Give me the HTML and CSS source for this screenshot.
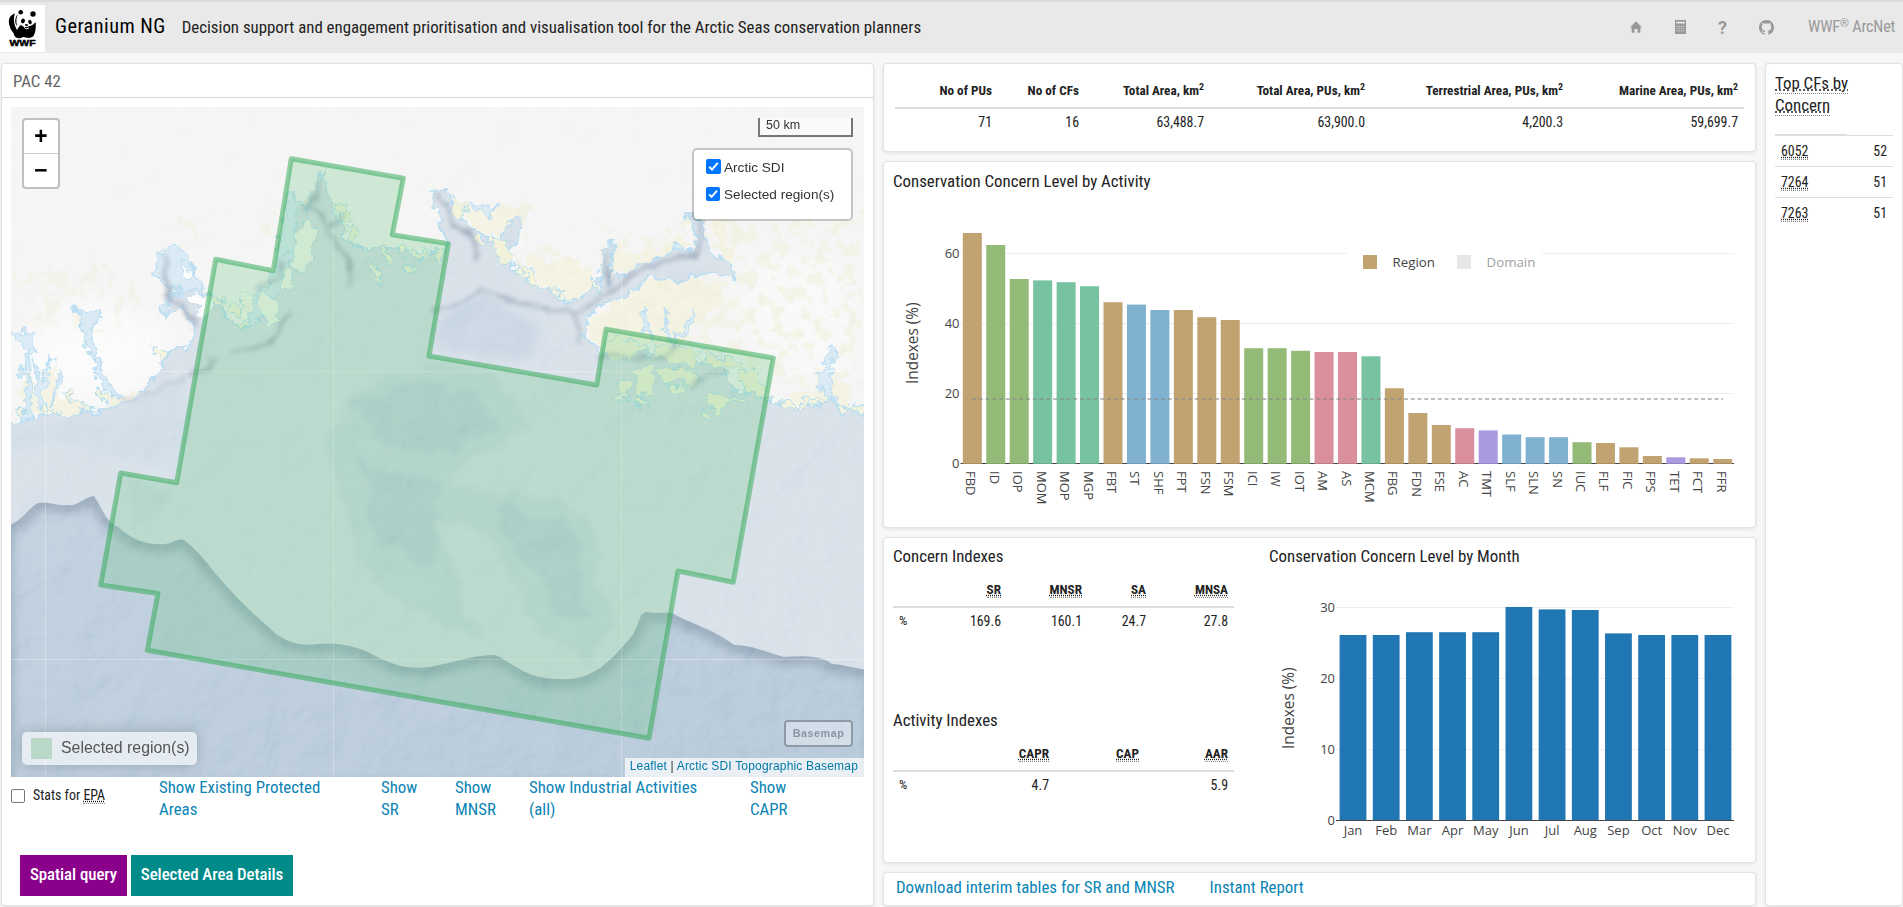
FILE: index.html
```html
<!DOCTYPE html>
<html lang="en">
<head>
<meta charset="utf-8">
<title>Geranium NG</title>
<link rel="stylesheet" href="styles.css">
</head>
<body>
<header class="navbar">
  <div class="logo">
    <svg viewBox="0 0 45 47" width="45" height="47">
      <g fill="#000">
        <circle cx="20.7" cy="7.2" r="2.3"/><circle cx="33" cy="9" r="2.7"/>
        <path d="M15 8.500C9 10 7.500 16 10 22C11 26 13 26 14 30C16 34 20 34 23 32C27 33 32 34 34 30C36 26 36 20 35.500 17C33 20 31 21 29 21C27 23 23 22 21 20C18 22 18 24 17 25C14 20 13 13 15 8.500Z"/>
        <path d="M18 9C14 13 15 19 17 21C16 16 16 13 18 9Z"/>
        <ellipse cx="23" cy="16" rx="1.900" ry="2.400" transform="rotate(30 23 16)"/>
        <ellipse cx="30" cy="17" rx="1.700" ry="2.300" transform="rotate(-25 30 17)"/>
        <ellipse cx="26.500" cy="20" rx="1.500" ry="1"/>
      </g>
      <path d="M24 22l2 2 3-1M11 27l3 2" stroke="#fff" stroke-width=".9" fill="none"/>
      <text class="logo-text" x="9.500" y="41.300" textLength="26" lengthAdjust="spacingAndGlyphs">WWF</text>
    </svg>
  </div>
  <h1 class="brand">Geranium NG</h1>
  <span class="tagline">Decision support and engagement prioritisation and visualisation tool for the Arctic Seas conservation planners</span>
  <nav class="nav-right">
    <svg class="i-home" viewBox="0 0 12 12" width="12" height="12"><path d="M6 .3 12 6.500H10.400V11.700H7.500V8H4.500V11.700H1.600V6.500H0Z"/></svg>
    <svg class="i-calc" viewBox="0 0 11 14" width="11" height="14"><path d="M0 0H11V14H0Z"/><path fill="#e9e9e9" d="M1.300 1.700h8.400v1.900H1.300ZM1.500 6h1v1h-1zm2.200 0h1v1h-1zm2.200 0h1v1h-1zm2.200 0h1v1h-1zM1.500 8.300h1v1h-1zm2.200 0h1v1h-1zm2.200 0h1v1h-1zm2.200 0h1v1h-1zM1.500 10.600h1v1h-1zm2.200 0h1v1h-1zm2.200 0h1v1h-1zm2.200 0h1v1h-1z"/></svg>
    <span class="i-help">?</span>
    <svg class="i-git" viewBox="0 0 16 16" width="15" height="15"><path d="M8 0C3.580 0 0 3.580 0 8c0 3.540 2.290 6.530 5.470 7.590.4.070.55-.17.55-.38 0-.19-.01-.82-.01-1.490-2.010.37-2.530-.49-2.690-.94-.09-.23-.48-.94-.82-1.130-.28-.15-.68-.52-.01-.53.63-.01 1.080.58 1.230.82.720 1.210 1.870.87 2.330.66.070-.52.280-.87.510-1.070-1.780-.2-3.640-.89-3.640-3.950 0-.87.310-1.590.82-2.150-.08-.2-.36-1.020.08-2.120 0 0 .67-.21 2.200.82.640-.18 1.320-.27 2-.27s1.360.09 2 .27c1.530-1.040 2.200-.82 2.200-.82.440 1.100.16 1.920.08 2.120.51.560.82 1.270.82 2.150 0 3.070-1.870 3.750-3.650 3.950.29.250.54.730.54 1.480 0 1.070-.01 1.930-.01 2.200 0 .21.15.46.55.38A8.010 8.010 0 0 0 16 8c0-4.420-3.580-8-8-8Z"/></svg>
    <span class="arcnet">WWF<sup>®</sup> ArcNet</span>
  </nav>
</header>

<main class="board">
  <section class="card map-card">
    <div class="card-title">PAC 42</div>
    <div class="map">
      <svg class="map-art" viewBox="11 107 853 670" width="853" height="670">
        <defs>
          <filter id="rough" x="-5%" y="-5%" width="110%" height="110%"><feTurbulence type="fractalNoise" baseFrequency=".09" numOctaves="3" seed="4"/><feDisplacementMap in="SourceGraphic" scale="17" xChannelSelector="R" yChannelSelector="G"/></filter>
          <filter id="wavy" x="-5%" y="-5%" width="110%" height="110%"><feTurbulence type="fractalNoise" baseFrequency=".03" numOctaves="3" seed="9"/><feDisplacementMap in="SourceGraphic" scale="30" xChannelSelector="R" yChannelSelector="G"/><feGaussianBlur stdDeviation="2.500"/></filter>
          <filter id="b2" x="-20%" y="-20%" width="140%" height="140%"><feTurbulence type="fractalNoise" baseFrequency=".06" numOctaves="2" seed="3"/><feDisplacementMap in="SourceGraphic" scale="14" xChannelSelector="R" yChannelSelector="G"/><feGaussianBlur stdDeviation="2"/></filter>
          <filter id="b4" x="-20%" y="-20%" width="140%" height="140%"><feGaussianBlur stdDeviation="4"/></filter>
          <filter id="b18" x="-40%" y="-40%" width="180%" height="180%"><feGaussianBlur stdDeviation="18"/></filter>
          <filter id="patchy" x="-5%" y="-5%" width="110%" height="110%"><feTurbulence type="fractalNoise" baseFrequency=".07" numOctaves="3" seed="12" result="n"/><feColorMatrix in="n" values="0 0 0 0 1  0 0 0 0 1  0 0 0 0 1  0 7 0 0 -3.500" result="m"/><feDisplacementMap in="SourceGraphic" in2="n" scale="18" xChannelSelector="R" yChannelSelector="G" result="d"/><feComposite in="d" in2="m" operator="in"/></filter>
          <filter id="relief" x="0" y="0" width="100%" height="100%"><feTurbulence type="fractalNoise" baseFrequency=".022" numOctaves="4" seed="7"/><feDiffuseLighting surfaceScale="7" diffuseConstant="1.250" lighting-color="#fff"><feDistantLight azimuth="225" elevation="40"/></feDiffuseLighting></filter>
          <path id="slope" d="M5 527C25 520 28 508 38 503C52 502 56 506 66 505C78 507 84 497 94 496C102 508 106 522 118 527C135 542 148 545 164 544C174 544 176 538 184 540C200 552 212 570 222 581C242 604 258 618 276 634C292 645 305 646 318 644C340 642 352 646 368 652C390 664 404 670 430 667C450 664 470 655 495 655C512 662 526 680 560 679C596 682 615 655 632 636C640 625 638 612 648 612C656 614 664 612 672 613C690 624 712 628 734 645C752 645 768 653 784 657C800 656 820 655 832 664C845 665 856 668 875 672V790H5Z"/>
          <clipPath id="deepClip"><use href="#slope"/></clipPath>
          <linearGradient id="deepG" x1="0" y1="0" x2="1" y2="1"><stop offset="0" stop-color="#bccddc"/><stop offset=".5" stop-color="#b6c8d9"/><stop offset="1" stop-color="#b0c4d6"/></linearGradient>
        </defs>
        <rect x="11" y="107" width="853" height="670" fill="#f4f4f4"/>
        <g filter="url(#b18)" fill="#fefefe"><path d="M20 350 80 300 180 330 170 350 130 395 30 400Z" opacity=".7"/><path d="M750 260 850 260V380L790 370 740 330Z" opacity=".5"/></g>
        <!-- lowland -->
        <g filter="url(#rough)" fill="#f3f2e0">
          <path d="M18 395 30 370 36 395 55 365 58 400 75 395 90 412 40 420Z"/>
          <path d="M105 388 118 396 138 392 130 407 108 405Z"/>
          <path d="M450 192 475 208 505 205 525 215 515 235 480 232Z"/>
          <path d="M525 255 545 262 565 258 590 268 598 286 572 303 545 288Z"/>
          <path d="M614 248 650 255 680 235 692 245 640 268 610 276Z"/>
          <path d="M710 215 722 215 735 262 722 260Z"/>
          <path d="M585 325 620 297 650 282 700 280 720 284 725 300 700 318 680 345 640 345 600 350Z"/>
          <path d="M785 400 820 385 845 385 858 415 840 412Z"/>
        </g>
        <g filter="url(#patchy)" fill="#eeeed8">
          <path d="M15 270 70 265 120 270 140 300 120 330 60 345 15 320ZM175 220 200 225 200 250 180 250ZM265 195 282 205 275 240 260 235ZM325 200 360 205 360 245 330 240Z" opacity=".4"/>
          <path d="M490 200 530 210 525 240 560 255 600 260 605 230 650 240 690 215 670 180 720 150 864 215V400L800 390 735 370 690 345 580 345 590 320 650 280 740 275 700 230 640 262 600 290 520 270 490 235Z" opacity=".65"/>
        </g>
        <!-- shelf -->
        <g filter="url(#rough)">
          <path id="shelf" fill="#d5dee7" stroke="#b3daf0" stroke-width="2" d="M5 424 40 418 70 416 110 408 135 400 152 382 170 352 190 348 195 330 186 312 170 306 178 290 166 285 160 265 170 255 190 266 200 288 215 296 228 318 240 326 250 332 262 318 272 295 280 284 290 270 284 240 292 205 306 208 316 190 320 172 326 190 330 205 336 215 345 235 360 250 395 250 425 257 448 245 437 215 432 192 446 190 452 210 470 225 484 235 500 240 512 220 520 216 516 240 505 262 520 272 545 290 570 303 598 288 604 252 613 238 608 285 640 264 670 254 695 252 698 235 686 212 702 222 706 250 725 258 737 278 710 273 680 280 650 278 630 292 600 306 588 318 584 335 600 352 620 357 665 352 690 355 720 370 735 390 770 402 800 407 835 400 875 420V790H5Z"/>
          <g fill="#d6e8f3" stroke="#b3daf0" stroke-width="1.500">
            <path d="M74 308 86 315 100 309 98 322 91 335 96 355 104 375 115 392 124 398 108 394 97 372 87 350 84 325Z"/>
            <path d="M5 328 28 336 36 330 33 346 28 362 32 390 30 422 22 425 27 380 18 375 28 350Z"/><path d="M34 358 42 380 52 355 48 378 38 410ZM60 370 64 375 55 398 50 405Z"/>
            <path d="M158 252 176 247 188 257 190 272 206 288 190 292 176 285 170 306 166 318 164 308 172 290 156 276Z"/>
            <path d="M288 195 297 195 296 225 288 262 284 290 272 300 262 322 256 320 250 332 246 305 262 292 276 272 280 240Z"/>
            <path d="M470 205 495 205 490 220ZM645 305 650 335 648 345 643 320ZM666 310 672 345 666 335ZM672 342 695 310 690 330ZM675 240 682 250 672 252Z"/>
            <path d="M828 347 838 350 832 365 830 385 835 400 824 395 815 375 824 372Z"/>
          </g>
          <g fill="#fcfcfc" stroke="#b3daf0"><path d="M181 264 192 276 190 282 180 272ZM184 296 205 294 216 300 204 318Z"/></g>
          <g fill="#f5f5ea" stroke="#a9d9ec"><ellipse cx="303" cy="247" rx="11" ry="27" transform="rotate(12 303 247)"/><ellipse cx="270" cy="310" rx="9" ry="16" transform="rotate(-18 270 310)"/><ellipse cx="246" cy="305" rx="6" ry="14"/><ellipse cx="287" cy="280" rx="5" ry="11"/></g>
          <g fill="#f2f1d6" stroke="#a9d9ec">
            <path d="M606 338 640 340 646 352 622 360 605 356ZM655 345 690 350 700 358 690 366 668 360 652 358ZM700 352 735 358 745 372 730 368 712 366ZM615 385 628 378 632 392 622 394ZM634 372 652 366 656 378 650 390 640 398 636 386ZM658 370 672 366 690 370 700 378 690 386 676 380 668 386ZM736 374 752 366 762 382 770 400 752 396 742 386ZM705 398 722 392 730 404 716 412ZM335 203 348 208 352 222 342 220ZM352 225 358 232 352 245ZM340 218 348 226 345 236Z"/>
            <path d="M455 196 468 208 462 218 450 212ZM488 235 505 240 512 256 505 264 492 250ZM515 262 530 268 540 284 525 280Z"/>
          </g>
        </g>
        <!-- skerries -->
        <g class="skerries" filter="url(#rough)">
          <path id="isles" d="M371 265l7 9M385 250l2 10M400 248l4 5M418 250l4 8M436 250l5 8M377 282l3 2M405 265l4 3M240 325l8 2M215 300l6 3M232 308l5 6M480 238l3 5M520 272l5 3M555 290l8 2M595 280l3 8M620 395l4 2M640 402l5 2M672 390l10 2M706 412l3 6M735 398l6 4M785 400l8 6M800 408l6-8M815 400l10 3M840 405l4 6M18 408l3 8M42 405l3 6M55 410l3 3M70 395l3 6M82 405l6 4M100 392l4 8M155 350l10 6M855 405l4 8"/>
          <use class="core" href="#isles"/>
        </g>
        <!-- fjord channels -->
        <g fill="none" stroke="#8b98ab" stroke-width="3.500" filter="url(#b2)" opacity=".75">
          <path d="M319 180 316 198 305 208 322 212 328 235 342 255 350 262 350 290M345 215 330 226"/><path d="M166 255 168 300 180 305 195 325M285 262 260 292M290 310 280 332 262 345 230 355M190 380 215 360 205 355"/>
          <path d="M440 195 452 220 475 240 478 262M575 312 610 292 650 266 695 256 704 240 695 215M608 250 606 290"/>
          <path d="M430 310 460 305 480 290 510 300 550 310 575 314 578 345M600 358 640 358 665 356 680 345M690 386 725 368" opacity=".8"/>
          <path d="M120 402 140 400 165 385 185 380" opacity=".6"/>
        </g>
        <g filter="url(#b4)">
          <path fill="#c2d1e0" d="M440 315 485 293 520 315 540 330 530 360 450 352 432 345Z" opacity=".8"/>
          <path fill="#c8d8e6" d="M11 430 100 418 180 380 190 420 178 470 120 455 60 440 11 450Z" opacity=".6"/>
        </g>
        <g filter="url(#wavy)">
          <path fill="#c3d2df" opacity=".65" d="M345 390 440 360 500 385 530 430 480 455 440 475 480 490 560 500 590 520 600 580 620 620 590 660 545 640 520 600 500 560 465 515 440 520 450 570 480 640 430 615 380 590 350 540 340 480 325 440Z"/>
          <path fill="#b3c6d7" opacity=".5" d="M340 400 420 380 480 400 500 430 440 450 380 440ZM495 505 570 520 575 560 590 610 560 615 530 570 500 530ZM360 465 430 480 440 540 430 570 380 540Z"/>
          <path fill="#c3d2df" opacity=".5" d="M125 480 175 490 160 515 130 530Z"/>
        </g>
        <!-- continental slope -->
        <use href="#slope" fill="url(#deepG)"/>
        <g clip-path="url(#deepClip)"><use href="#slope" fill="none" stroke="#7f92a4" stroke-width="17" filter="url(#b4)" opacity=".6"/></g>
        <rect class="relief" x="11" y="107" width="853" height="670" filter="url(#relief)"/>
        <path stroke="#fff" stroke-opacity=".3" d="M45.500 107V777M333.500 107V777M621.500 107V777M11 371.500H864M11 659.500H864"/>
        <path class="region" d="M291.300 158.700 403.300 178.300 392.300 234.700 448.300 243.700 429 356 596.700 385 606 329.300 773.300 358 733.300 582.300 678 571 649 738.300 147.300 650.300 158 593.500 100.700 585 120.700 473 176.700 482.700 215.700 259.300 273.300 270.700Z"/>
      </svg>
      <div class="zoom"><span>+</span><span>−</span></div>
      <div class="scale">50 km</div>
      <div class="layers">
        <label class="l1"><i class="cb"><svg viewBox="0 0 15 15"><path d="M3.300 7.800 6 10.600 11.800 3.800"/></svg></i>Arctic SDI</label>
        <label class="l2"><i class="cb"><svg viewBox="0 0 15 15"><path d="M3.300 7.800 6 10.600 11.800 3.800"/></svg></i>Selected region(s)</label>
      </div>
      <div class="legend"><i></i>Selected region(s)</div>
      <div class="basemap">Basemap</div>
      <div class="attrib"><a>Leaflet</a> | <a>Arctic SDI Topographic Basemap</a></div>
    </div>
    <div class="links">
      <label class="stats"><i></i><span>Stats for <abbr>EPA</abbr></span></label>
      <a>Show Existing Protected<br>Areas</a><a>Show<br>SR</a><a>Show<br>MNSR</a><a>Show Industrial Activities<br>(all)</a><a>Show<br>CAPR</a>
    </div>
    <div class="buttons"><button class="btn purple">Spatial query</button><button class="btn teal">Selected Area Details</button></div>
  </section>

  <div class="middle">
    <section class="card totals">
      <table class="tbl">
        <colgroup><col class="a"><col class="b"><col class="c"><col class="d"><col class="e"><col class="f"></colgroup>
        <tr><th>No of PUs</th><th>No of CFs</th><th>Total Area, km<sup>2</sup></th><th>Total Area, PUs, km<sup>2</sup></th><th>Terrestrial Area, PUs, km<sup>2</sup></th><th>Marine Area, PUs, km<sup>2</sup></th></tr>
        <tr><td>71</td><td>16</td><td>63,488.7</td><td>63,900.0</td><td>4,200.3</td><td>59,699.7</td></tr>
      </table>
    </section>
    <section class="card activity">
      <h2>Conservation Concern Level by Activity</h2>
      <svg id="activity" class="chart" viewBox="884 200 870 326" width="870" height="326"></svg>
    </section>
    <section class="card indexes">
      <div class="idx-left">
        <div class="idx-block">
          <h2>Concern Indexes</h2>
          <table class="tbl">
            <colgroup><col class="g"><col class="h"><col class="i"><col class="j"><col class="k"></colgroup>
            <tr><th></th><th><abbr>SR</abbr></th><th><abbr>MNSR</abbr></th><th><abbr>SA</abbr></th><th><abbr>MNSA</abbr></th></tr>
            <tr><td class="pc">%</td><td>169.6</td><td>160.1</td><td>24.7</td><td>27.8</td></tr>
          </table>
        </div>
        <div class="idx-block">
          <h2>Activity Indexes</h2>
          <table class="tbl">
            <colgroup><col class="g"><col class="l"><col class="m"><col class="n"></colgroup>
            <tr><th></th><th><abbr>CAPR</abbr></th><th><abbr>CAP</abbr></th><th><abbr>AAR</abbr></th></tr>
            <tr><td class="pc">%</td><td>4.7</td><td></td><td>5.9</td></tr>
          </table>
        </div>
      </div>
      <div class="idx-right">
        <h2>Conservation Concern Level by Month</h2>
        <svg id="month" class="chart" viewBox="1269 575 485 286" width="485" height="286"></svg>
      </div>
    </section>
    <section class="card downloads"><a>Download interim tables for SR and MNSR</a><a>Instant Report</a></section>
  </div>

  <aside class="card top-cfs">
    <h2><abbr>Top CFs by<br>Concern</abbr></h2>
    <table class="tbl cfs">
      <tr><td><abbr>6052</abbr></td><td>52</td></tr>
      <tr><td><abbr>7264</abbr></td><td>51</td></tr>
      <tr><td><abbr>7263</abbr></td><td>51</td></tr>
    </table>
  </aside>
</main>
<script src="charts.js"></script>
</body>
</html>
```
FILE: styles.css
```css
* { box-sizing: border-box; }
body { margin: 0; height: 907px; overflow: hidden; background: #f7f7f7; color: #222; font-family: "Roboto Condensed", Roboto, sans-serif; font-stretch: 75%; font-size: 16.850px; line-height: 22px; }
a { color: #0a84b5; text-decoration: none; }
abbr { text-decoration: underline dotted; border-bottom: 1px dotted #888; }
h1, h2 { margin: 0; font-weight: 400; }
h2 { font-size: 16.850px; line-height: 22px; }
sup { font-size: 75%; line-height: 0; position: relative; top: -.5em; vertical-align: baseline; }

.navbar { height: 53px; background: #e9e9e9; border-top: 2px solid #dcdcdc; display: flex; align-items: center; }
.logo { width: 45px; height: 47px; background: #fff; margin-top: 2px; }
.logo svg { display: block; }
.logo-text { font: 900 9px "Liberation Sans", sans-serif; stroke: #000; stroke-width: .5px; }
.brand { font-size: 20.300px; letter-spacing: .45px; margin: 0 0 3px 10px; color: #000; white-space: nowrap; }
.tagline { margin: 0 0 1px 16px; white-space: nowrap; }
.nav-right { margin-left: auto; padding-right: 8px; display: flex; align-items: center; color: #999; fill: #999; margin-bottom: 1px; }
.i-calc { margin-left: 33px; }
.i-help { margin-left: 32px; font: 700 18px Roboto, sans-serif; }
.i-git { margin-left: 32px; }
.arcnet { margin-left: 34px; white-space: nowrap; width: 87px; font-size: 16.200px; letter-spacing: -.2px; }
.arcnet sup { font-size: 72%; top: -.45em; }

.board { display: grid; grid-template-columns: 871px 871px 136px; column-gap: 11px; padding: 11px 1px 2px 2px; height: 854px; }
.card { background: #fff; border-radius: 3px; box-shadow: 0 0 0 1px #e2e2e2, 0 1px 4px rgba(0,0,0,.14); min-width: 0; }
.middle { display: grid; grid-template-rows: 87px 365px 324px 32px; row-gap: 11px; }

.card-title { height: 34px; border-bottom: 1px solid #d5d5d5; padding: 6px 11px; color: #666; }
.map { position: relative; margin: 9px 9px 0; width: 853px; height: 670px; overflow: hidden; font-family: "Liberation Sans", sans-serif; font-stretch: normal; color: #333; }
.map-art { display: block; }
.skerries { fill: none; stroke: #a9d9ec; stroke-width: 7; stroke-linecap: round; }
.skerries .core { stroke: #f3f2da; stroke-width: 4.500; }
.relief { mix-blend-mode: soft-light; opacity: .3; }
.region { fill: rgba(108,200,132,.27); stroke: rgba(50,168,86,.52); stroke-width: 5; stroke-linejoin: round; }
.zoom { position: absolute; left: 11px; top: 11px; width: 38px; height: 71px; border: 2px solid rgba(0,0,0,.22); border-radius: 4px; background: #fff; background-clip: padding-box; font: 700 23px/37px "Liberation Mono", monospace; color: #000; }
.zoom span { display: block; height: 33px; text-align: center; }
.zoom span + span { border-top: 1px solid #ccc; height: 34px; }
.scale { position: absolute; right: 11px; top: 11px; width: 95px; height: 19px; border: 2px solid #777; border-top: 0; background: rgba(255,255,255,.5); font-size: 12.500px; line-height: 15px; padding-left: 6px; }
.layers { position: absolute; right: 11px; top: 41px; width: 161px; height: 73px; border: 2px solid rgba(0,0,0,.2); border-radius: 5px; background: #fff; background-clip: padding-box; font-size: 13.600px; padding: 9px 12px; }
.layers label { display: flex; height: 27px; line-height: 18px; white-space: nowrap; }
.cb { width: 15px; height: 15px; border-radius: 2px; background: #0075ff; margin-right: 3px; flex: none; }
.cb svg { display: block; fill: none; stroke: #fff; stroke-width: 2; }
.l2 .cb { width: 14px; height: 14px; margin: 1px 4px 0 0; }
.legend { position: absolute; left: 11px; bottom: 12px; width: 175px; height: 33px; border-radius: 5px; background: rgba(255,255,255,.6); box-shadow: 0 0 15px rgba(0,0,0,.2); display: flex; align-items: center; padding: 0 0 2px 9px; font-size: 15.850px; color: #555; white-space: nowrap; }
.legend i { width: 21px; height: 21px; background: #b9d8c8; margin-right: 9px; margin-top: 2px; }
.basemap { position: absolute; right: 11px; bottom: 30px; width: 69px; height: 27px; border: 2px solid #8d9ba8; border-radius: 4px; background: rgba(255,255,255,.35); font-size: 10.800px; font-weight: 700; line-height: 22px; text-align: center; letter-spacing: .5px; color: #8996a3; }
.attrib { position: absolute; right: 0; bottom: 0; height: 19px; background: rgba(255,255,255,.7); padding: 0 6px 0 5px; font-size: 12px; letter-spacing: .18px; line-height: 17px; white-space: nowrap; }
.attrib a { color: #0078a8; }

.links { display: grid; grid-template-columns: 148px 222px 74px 74px 221px auto; padding-left: 9px; height: 78px; white-space: nowrap; margin-top: -1px; margin-bottom: 1px; }
.stats { display: flex; font-size: 13.900px; gap: 8px; padding-top: 8px; }
.stats i { width: 14px; height: 14px; border: 1px solid #767676; border-radius: 2px; margin-top: 5px; }
.buttons { display: flex; gap: 4px; padding-left: 18px; }
.btn { border: 0; height: 41px; color: #fff; font: inherit; font-weight: 500; white-space: nowrap; padding: 0 0 3px; letter-spacing: -.05px; }
.purple { background: #8b008b; width: 107px; }
.teal { background: #008b8b; width: 162px; }

.tbl { border-collapse: collapse; table-layout: fixed; font-size: 13.900px; line-height: 18px; }
.tbl th, .tbl td { padding: 0 6px; text-align: right; white-space: nowrap; font-weight: 400; }
.tbl th { font-weight: 700; border-bottom: 2px solid #ddd; height: 34px; font-size: 13.200px; }
.tbl td { height: 30px; padding-bottom: 3px; }
.totals { padding: 10px 11px 0; }
.totals .tbl { width: 849px; }
.totals th { padding-top: 1px; }
.a { width: 103px; } .b { width: 87px; } .c { width: 125px; } .d { width: 161px; } .e { width: 198px; } .f { width: 175px; }
.activity h2 { padding: 8px 9px 0; height: 38px; }
.chart { display: block; overflow: visible; font-family: "Open Sans", sans-serif; font-stretch: normal; font-size: 13px; fill: #444; }
.indexes { display: grid; grid-template-columns: 376px 1fr; }
.idx-left { padding: 0 9px; }
.idx-block { height: 164px; padding-top: 7px; }
.idx-block .tbl { width: 341px; margin-top: 7px; }
.idx-block th { height: 33px; }
.tbl .pc { text-align: left; font-size: 13px; }
.g { width: 40px; } .h { width: 74px; } .i { width: 81px; } .j { width: 64px; } .k { width: 82px; }
.l { width: 122px; } .m { width: 90px; } .n { width: 89px; }
.idx-right { padding: 7px 0 0 9px; }
.idx-right .chart { margin: 7px 0 0; }
.downloads { display: flex; gap: 35px; padding: 3px 12px; white-space: nowrap; }
.top-cfs { padding: 8px 9px; }
.top-cfs h2 { width: 72px; height: 63px; border-bottom: 1px solid #ddd; white-space: nowrap; }
.cfs { width: 118px; }
.cfs td { height: 31px; border-top: 1px solid #ddd; padding-bottom: 0; }
.cfs td:first-child { text-align: left; }
```
FILE: charts.js
```js
const NS = 'http://www.w3.org/2000/svg';

function add(svg, tag, attrs, text) {
  const el = document.createElementNS(NS, tag);
  for (const k in attrs) el.setAttribute(k, attrs[k]);
  if (text !== undefined) el.textContent = text;
  svg.appendChild(el);
  return el;
}

function axes(svg, x1, x2, ticks, y0, unit) {
  ticks.forEach(t => {
    const y = y0 - t * unit;
    if (t) add(svg, 'line', { x1, x2, y1: Math.floor(y) + 0.5, y2: Math.floor(y) + 0.5, stroke: '#eee' });
    add(svg, 'text', { x: x1 - 1, y: y + 4.500, 'text-anchor': 'end' }, t);
  });
  add(svg, 'line', { x1, x2, y1: y0, y2: y0, stroke: '#444' });
}

const F = '#c1a271', I = '#94ba77', M = '#77c2a1', S = '#80b1d0', A = '#d98f9c', T = '#a999df';
const activity = [['FBD',233,F],['ID',245,I],['IOP',279,I],['MOM',280.4,M],['MOP',282.2,M],['MGP',286.2,M],['FBT',302.2,F],['ST',304.6,S],['SHF',310,S],['FPT',310,F],['FSN',317.2,F],['FSM',320,F],['ICI',348.2,I],['IW',348.2,I],['IOT',350.8,I],['AM',352,A],['AS',352,A],['MCM',356.3,M],['FBG',388.3,F],['FDN',413,F],['FSE',425,F],['AC',428.2,A],['TMT',430.4,T],['SLF',434.5,S],['SLN',437.2,S],['SN',437.2,S],['IUC',442.2,I],['FLF',443,F],['FIC',447.3,F],['FPS',456,F],['TET',457.3,T],['FCT',458.3,F],['FFR',459,F]];
const act = document.getElementById('activity');
axes(act, 960.5, 1734, [0, 20, 40, 60], 463.5, 3.503);
activity.forEach(([name, top, fill], i) => {
  const cx = 972.3 + i * 23.45;
  add(act, 'rect', { x: cx - 9.5, y: top, width: 19, height: 463.8 - top, fill });
  add(act, 'text', { transform: `translate(${cx - 6} 471) rotate(90)` }, name);
});
add(act, 'line', { x1: 972, x2: 1723, y1: 399, y2: 399, stroke: '#888', 'stroke-opacity': 0.55, 'stroke-width': 2, 'stroke-dasharray': '4 2.75' });
add(act, 'rect', { x: 1347, y: 247, width: 195, height: 30, fill: '#fff' });
add(act, 'rect', { x: 1363, y: 255, width: 14, height: 14, fill: F });
add(act, 'text', { x: 1392.500, y: 267, 'font-size': 13.3 }, 'Region');
add(act, 'rect', { x: 1457, y: 255, width: 14, height: 14, fill: '#e6e6e6' });
add(act, 'text', { x: 1486.500, y: 267, opacity: 0.5, 'font-size': 13.3 }, 'Domain');
add(act, 'text', { transform: 'translate(918 384) rotate(-90)', 'font-size': 15.4 }, 'Indexes (%)');

const month = document.getElementById('month');
axes(month, 1336, 1734, [0, 10, 20, 30], 821.5, 7.1);
[['Jan',636],['Feb',636],['Mar',633.2],['Apr',633.2],['May',633.2],['Jun',608],['Jul',610.4],['Aug',611],['Sep',634.4],['Oct',636],['Nov',636],['Dec',636]].forEach(([name, top], i) => {
  const cx = 1353 + i * 33.18;
  add(month, 'rect', { x: cx - 13.4, y: top, width: 26.8, height: 821 - top, fill: '#2077b4' });
  add(month, 'text', { x: cx, y: 836, 'text-anchor': 'middle' }, name);
});
add(month, 'text', { transform: 'translate(1294 750) rotate(-90)', 'font-size': 15.4 }, 'Indexes (%)');
```
